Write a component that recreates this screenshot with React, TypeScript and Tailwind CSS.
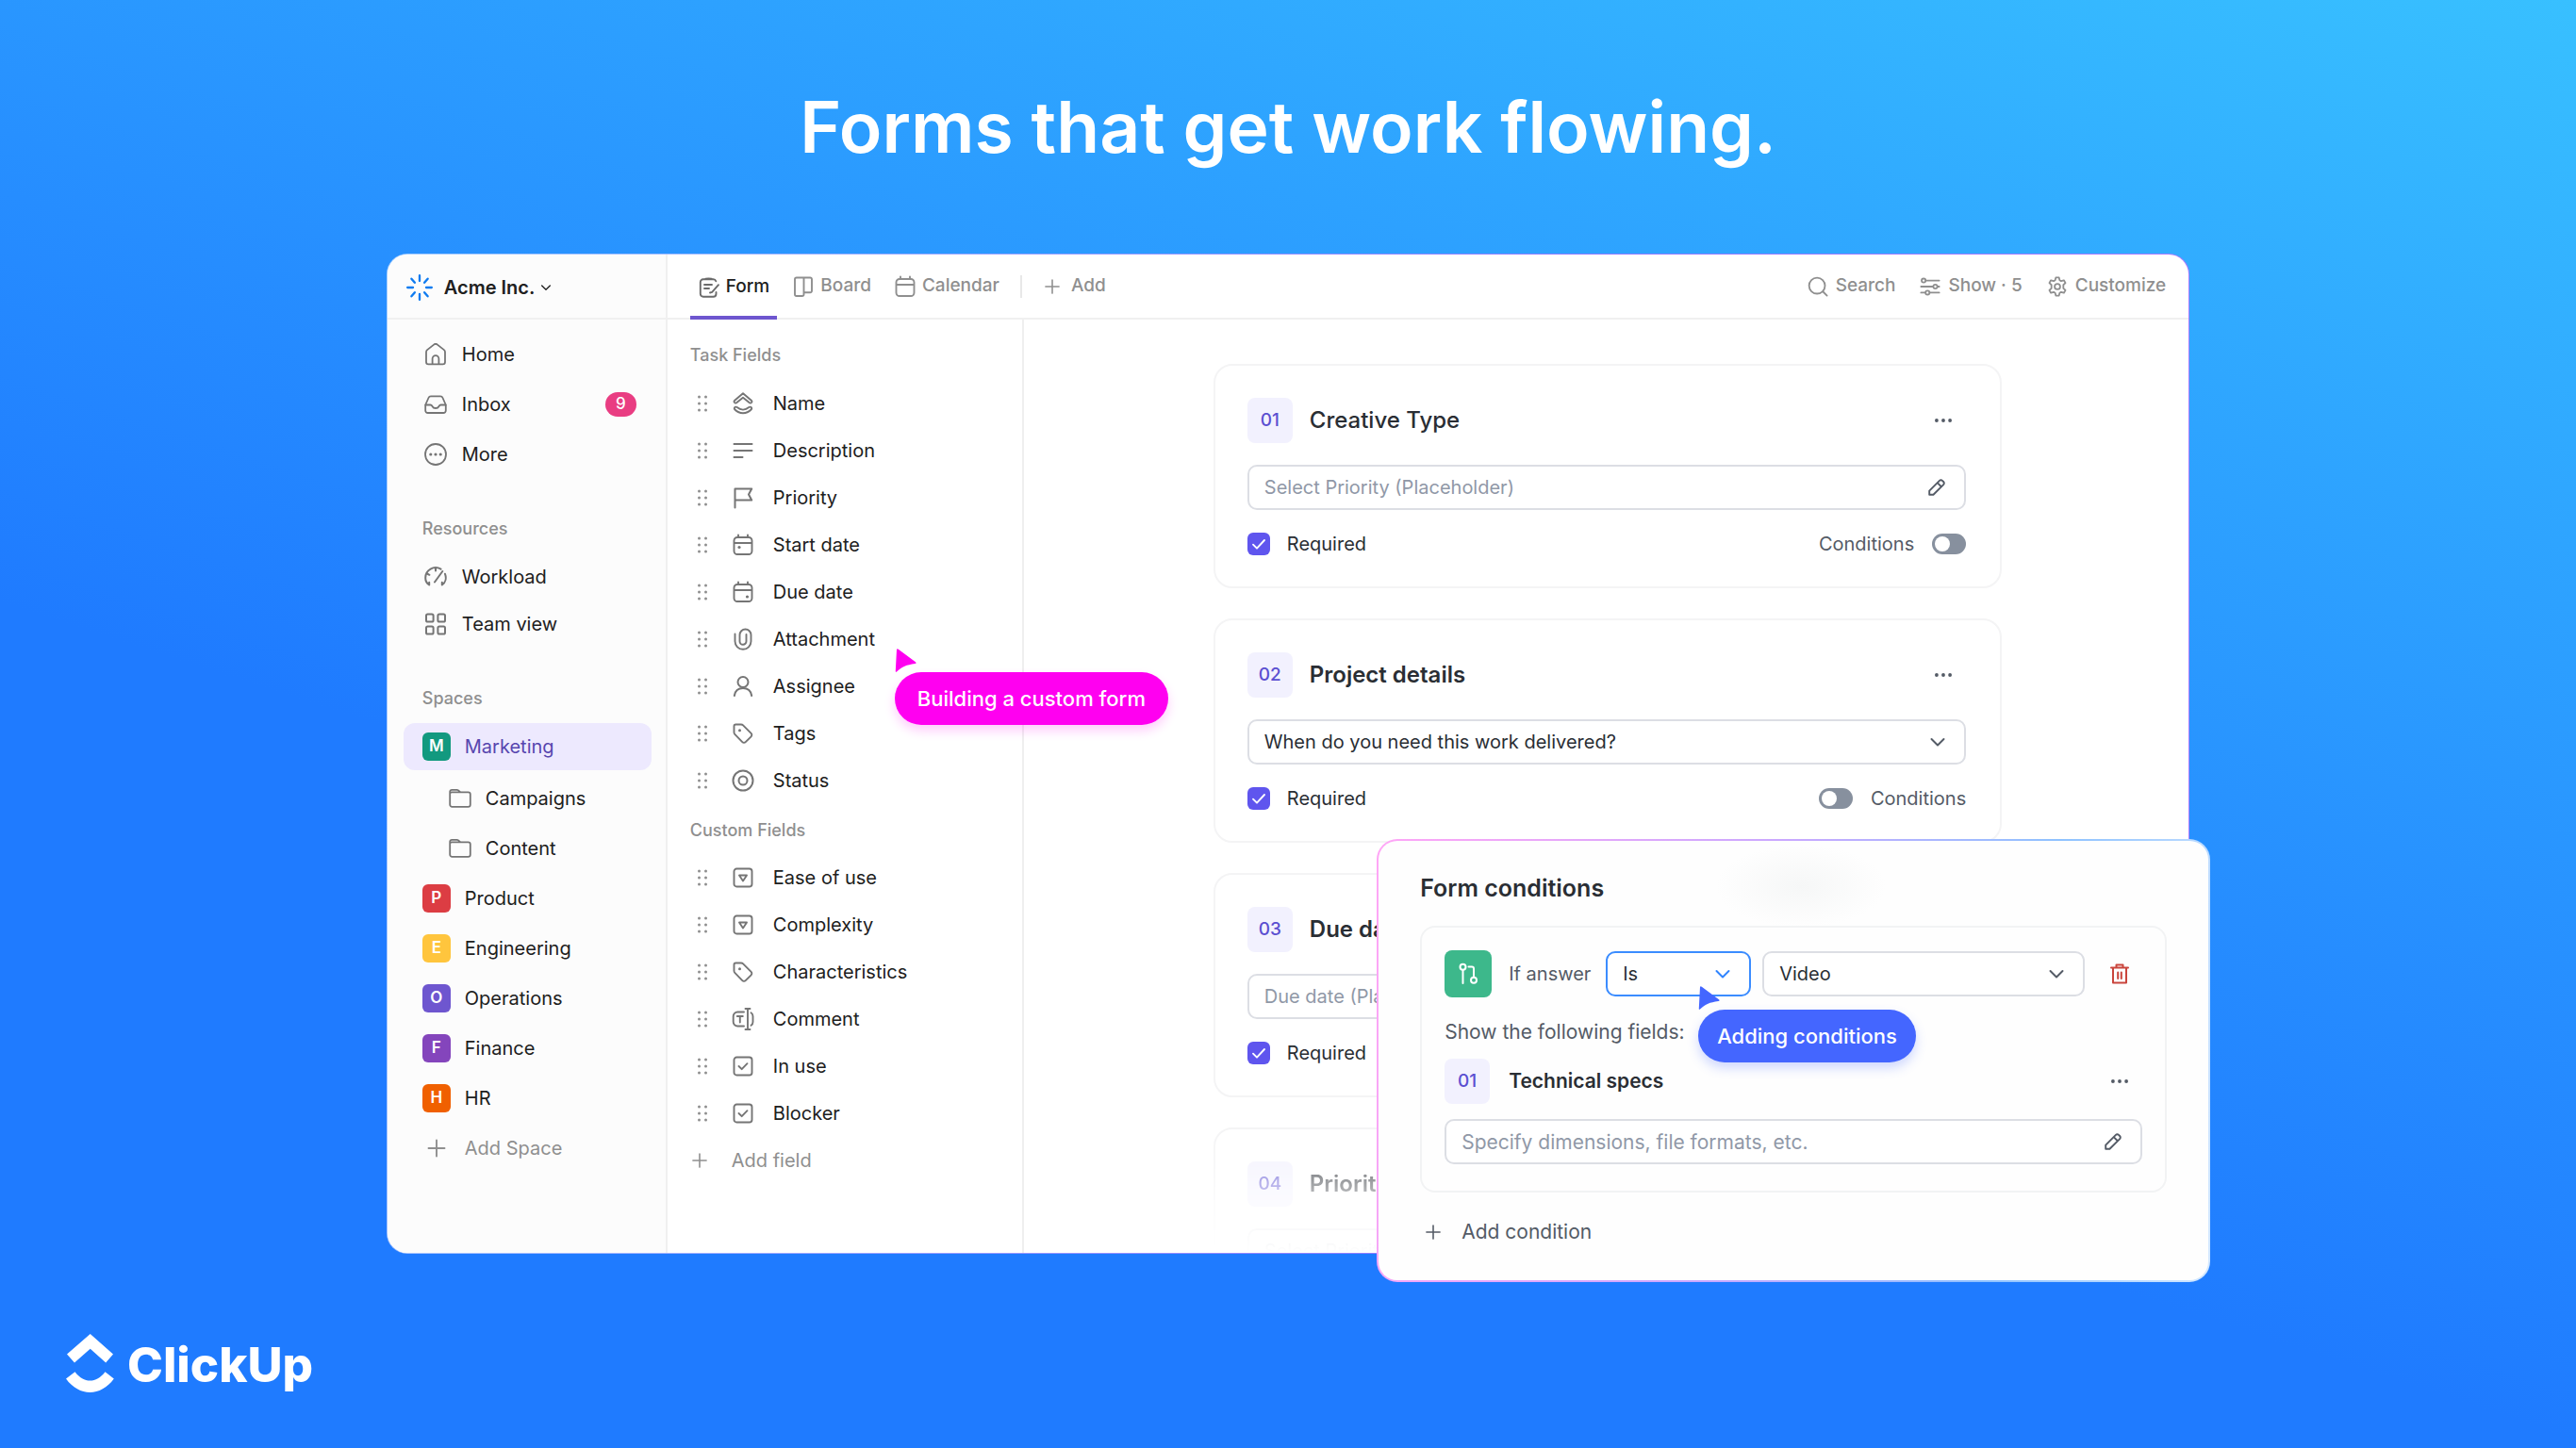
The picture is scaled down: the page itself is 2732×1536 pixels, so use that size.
import type { ReactNode } from "react";
import clsx from "clsx";

interface IconProps {
  className?: string;
  strokeWidth?: number;
  children: ReactNode;
}

const Icon = ({ className = "size-6", strokeWidth = 2, children }: IconProps) => (
  <svg
    viewBox="0 0 24 24"
    fill="none"
    stroke="currentColor"
    strokeWidth={strokeWidth}
    strokeLinecap="round"
    strokeLinejoin="round"
    aria-hidden="true"
    className={clsx("shrink-0", className)}
  >
    {children}
  </svg>
);

interface GlyphProps {
  className?: string;
}

const BurstIcon = () => (
  <Icon className="size-7 text-[#0f7bf0]" strokeWidth={2}>
    <path d="M12 1v5M12 18v5M1 12h5M18 12h5M4.6 4l3 3.6M19.4 4l-3 3.6M4.6 20l3-3.6M19.4 20l-3-3.6" />
  </Icon>
);

const HomeIcon = () => (
  <Icon strokeWidth={1.8}>
    <path d="M2 9.4a3 3 0 0 1 1.1-2.3l7-5.5a3 3 0 0 1 3.8 0l7 5.5A3 3 0 0 1 22 9.4V20a2.4 2.4 0 0 1-2.4 2.4H4.4A2.4 2.4 0 0 1 2 20z" />
    <path d="M8.6 22v-5.400a3.400 3.400 0 0 1 6.800 0V22" />
  </Icon>
);

const InboxIcon = () => (
  <Icon strokeWidth={1.8}>
    <path d="M1.200 12.500 4.500 5a2.600 2.600 0 0 1 2.400-1.600h10.200A2.600 2.600 0 0 1 19.500 5l3.300 7.500v6a2.500 2.500 0 0 1-2.500 2.500H3.700a2.500 2.500 0 0 1-2.500-2.500z" />
    <path d="M1.400 12.500h5.100c1.300 0 1.500.7 2.100 1.700.7 1.300 1.800 1.800 3.400 1.800s2.700-.5 3.400-1.800c.6-1 .8-1.700 2.100-1.700h5.100" />
  </Icon>
);

const MoreIcon = () => (
  <Icon strokeWidth={1.8}>
    <circle cx="12" cy="12" r="11" />
    <g fill="currentColor" stroke="none">
      <circle cx="6.800" cy="12" r="1.600" />
      <circle cx="12" cy="12" r="1.600" />
      <circle cx="17.200" cy="12" r="1.600" />
    </g>
  </Icon>
);

const GaugeIcon = () => (
  <Icon strokeWidth={2}>
    <path d="M5.200 20.500c-2.600-1.600-4-4.400-4-7.400A10.800 10.800 0 0 1 17.500 3.700M12 2.500v3M3 8.500l2.400 1.300M5.200 20.500v-2.700M22 8.800c1.600 4.200.6 9-3.200 11.700v-2.700M19.300 6 11 17.500" />
  </Icon>
);

const GridIcon = () => (
  <Icon strokeWidth={2}>
    <rect x="2" y="1.500" width="7.600" height="8" rx="1.600" />
    <rect x="14.400" y="1.500" width="7.600" height="8" rx="1.600" />
    <rect x="2" y="14.500" width="7.600" height="8" rx="1.600" />
    <rect x="14.400" y="14.500" width="7.600" height="8" rx="1.600" />
  </Icon>
);

const FolderIcon = () => (
  <Icon className="size-6 text-[#757575]" strokeWidth={1.8}>
    <path d="M1.200 8V4.800a2 2 0 0 1 2-2h5.300c.7 0 1.100.2 1.600.6l2.300 2h8.200a2.200 2.200 0 0 1 2.200 2.200v10.900a2.400 2.400 0 0 1-2.400 2.400H3.600a2.400 2.400 0 0 1-2.400-2.400zM1.400 6.200c.5-.5 1-.8 1.800-.8h9.200" />
  </Icon>
);

const PlusIcon = ({ className = "size-6" }: GlyphProps) => (
  <Icon className={className} strokeWidth={1.9}>
    <path d="M12 3.500v17M3.500 12h17" />
  </Icon>
);

const ChevronIcon = ({ className = "size-6" }: GlyphProps) => (
  <Icon className={className}>
    <path d="m5.500 9 6.500 6.500L18.500 9" />
  </Icon>
);

const DotsIcon = () => (
  <Icon className="size-5 text-[#545b66]">
    <g fill="currentColor" stroke="none">
      <circle cx="3.500" cy="12" r="2.300" />
      <circle cx="12" cy="12" r="2.300" />
      <circle cx="20.500" cy="12" r="2.300" />
    </g>
  </Icon>
);

const PencilIcon = () => (
  <Icon className="pointer-events-none size-[22px] text-[#545b66]" strokeWidth={2.1}>
    <path d="M3.500 20.500v-4.600L15.200 4.200a2.300 2.300 0 0 1 3.300 0l1.300 1.300a2.300 2.300 0 0 1 0 3.300L8.100 20.500zM12.800 6.700l4.500 4.500" />
  </Icon>
);

const FormIcon = () => (
  <Icon className="size-6 text-[#6b6b6b]" strokeWidth={1.9}>
    <path d="M19.500 17v1.800a3 3 0 0 1-3 3H5.800a3 3 0 0 1-3-3V6.300a3 3 0 0 1 3-3h10.700a3 3 0 0 1 2.800 2M7.500 3.300c.8-1.300 7.200-1.300 8 0M7 9h8M7 13h5M22 9.200l-6.800 7.600-2.200.7" />
  </Icon>
);

const BoardIcon = () => (
  <Icon strokeWidth={1.9}>
    <path d="M4.800 2.500h14.400A1.800 1.800 0 0 1 21 4.300v12.200a1.800 1.800 0 0 1-1.800 1.800h-6.700v1.900a1.800 1.800 0 0 1-1.800 1.800H4.800A1.800 1.800 0 0 1 3 20.200V4.300a1.800 1.800 0 0 1 1.800-1.800zM12.500 2.500v15.800" />
  </Icon>
);

const CalendarIcon = ({ children }: { children?: ReactNode }) => (
  <Icon strokeWidth={1.9}>
    <rect x="2.500" y="4" width="19" height="18" rx="3.500" />
    <path d="M2.800 10h18.400M7 1.500V4M17 1.500V4" />
    {children}
  </Icon>
);

const SearchIcon = () => (
  <Icon className="size-[22px]" strokeWidth={2}>
    <circle cx="11" cy="11" r="9.200" />
    <path d="m18 18 4.500 4.500" />
  </Icon>
);

const SlidersIcon = () => (
  <Icon className="size-[22px]" strokeWidth={2}>
    <path d="M7 5h15.500M1.500 12h13.800M20.500 12h2M1.500 19h5.200M11.500 19h11" />
    <circle cx="4.500" cy="5" r="2.300" />
    <circle cx="18" cy="12" r="2.300" />
    <circle cx="9" cy="19" r="2.300" />
  </Icon>
);

const GearIcon = () => (
  <Icon className="size-[22px]" strokeWidth={2}>
    <circle cx="12" cy="12" r="3.200" />
    <path d="M10.200 1.500h3.600l.8 3.200 1.700 1 3.200-1 1.800 3.100-2.400 2.300v3.800l2.400 2.300-1.800 3.100-3.200-1-1.700 1-.8 3.200h-3.600l-.8-3.200-1.700-1-3.200 1-1.800-3.100 2.400-2.300v-3.800L2.700 7.800l1.800-3.100 3.200 1 1.700-1z" />
  </Icon>
);

const NameIcon = () => (
  <Icon strokeWidth={1.9}>
    <path d="M12 1.200 3.200 8.700c-.8.8-.8 1.600-.2 2.300s1.600.8 2.400.1L12 5.800l6.600 5.300c.8.700 1.800.6 2.400-.1s.6-1.500-.2-2.300zM3.200 16.200c.7-.8 1.800-.8 2.500-.1 3.800 3.200 8.800 3.200 12.600 0 .7-.7 1.800-.7 2.500.1.600.8.500 1.600-.2 2.300-5 5-12.200 5-17.200 0-.7-.7-.8-1.500-.2-2.300z" />
  </Icon>
);

const LinesIcon = () => (
  <Icon strokeWidth={2}>
    <path d="M2.500 5h19M2.500 12h19M2.500 19h9" />
  </Icon>
);

const FlagIcon = () => (
  <Icon strokeWidth={2}>
    <path d="M3.500 22.500V2.500h17.700L18 8.500l3.200 6H3.500" />
  </Icon>
);

const ClipIcon = () => (
  <Icon strokeWidth={1.9}>
    <path d="M3.500 6.500v7.800a8.500 8.500 0 0 0 17 0V7.500a6 6 0 0 0-12 0v6.800a3.500 3.500 0 0 0 7 0V7" />
  </Icon>
);

const PersonIcon = () => (
  <Icon strokeWidth={2}>
    <circle cx="12" cy="7.500" r="5.500" />
    <path d="M2.800 22c.8-5 4.200-8 9.200-8s8.400 3 9.200 8" />
  </Icon>
);

const TagIcon = () => (
  <Icon strokeWidth={1.9}>
    <path d="M4.300 2.500H10a3 3 0 0 1 2.100.9l8.500 8.500a2.400 2.400 0 0 1 0 3.400l-5.900 5.900a2.400 2.400 0 0 1-3.400 0l-8-8.300A3 3 0 0 1 2.500 11V4.300a1.800 1.800 0 0 1 1.800-1.800z" />
    <circle cx="8.500" cy="8.700" r="1.500" fill="currentColor" stroke="none" />
  </Icon>
);

const TargetIcon = () => (
  <Icon strokeWidth={2}>
    <circle cx="12" cy="12" r="10.500" />
    <circle cx="12" cy="12" r="4.500" />
  </Icon>
);

const DropdownIcon = () => (
  <Icon strokeWidth={1.9}>
    <rect x="2.500" y="2.500" width="19" height="19" rx="2.800" />
    <path d="M8 9.500h8L12 15.500z" />
  </Icon>
);

const CheckBoxIcon = () => (
  <Icon strokeWidth={1.9}>
    <rect x="2.500" y="2.500" width="19" height="19" rx="2.800" />
    <path d="m7.500 12 3.200 3.200 5.800-6" />
  </Icon>
);

const TextFieldIcon = () => (
  <Icon strokeWidth={1.9}>
    <path d="M13 4.500H6.200A4.500 4.500 0 0 0 1.700 9v6a4.500 4.500 0 0 0 4.500 4.500H13M20.500 5.200c1.300.8 2 2.200 2 3.800v6c0 1.600-.7 3-2 3.800M14.500 1h5M17 1v22M14.500 23h5M5.800 9h6M8.800 9v6.500" />
  </Icon>
);

const BranchIcon = () => (
  <Icon strokeWidth={2}>
    <circle cx="6.500" cy="4.800" r="3" />
    <path d="M6.500 8v14M12.500 4.500H16a2 2 0 0 1 2 2v9" />
    <circle cx="18" cy="18.800" r="3" />
  </Icon>
);

const TrashIcon = () => (
  <Icon className="size-6 text-[#c9453c]" strokeWidth={2}>
    <path d="M3 5.500h18M8.500 5V2.500h7V5M5 6v15.500h14V6M10.200 10.500v6.500M13.800 10.500v6.500" />
  </Icon>
);

const DragHandle = () => (
  <svg viewBox="0 0 12 20" fill="#8f8f8f" aria-hidden="true" className="h-5 w-3 shrink-0">
    {[3, 10, 17].map((y) => (
      <g key={y}>
        <circle cx="2.500" cy={y} r="1.500" />
        <circle cx="9.500" cy={y} r="1.500" />
      </g>
    ))}
  </svg>
);

const mainLinks = [
  { label: "Home", icon: <HomeIcon /> },
  { label: "Inbox", icon: <InboxIcon />, count: 9 },
  { label: "More", icon: <MoreIcon /> },
];

const resourceLinks = [
  { label: "Workload", icon: <GaugeIcon /> },
  { label: "Team view", icon: <GridIcon /> },
];

const spaces = [
  { label: "Product", color: "bg-[#dc3d43]" },
  { label: "Engineering", color: "bg-[#ffc53d]" },
  { label: "Operations", color: "bg-[#6e56cf]" },
  { label: "Finance", color: "bg-[#8445bc]" },
  { label: "HR", color: "bg-[#f06000]" },
];

const taskFields = [
  { label: "Name", icon: <NameIcon /> },
  { label: "Description", icon: <LinesIcon /> },
  { label: "Priority", icon: <FlagIcon /> },
  {
    label: "Start date",
    icon: (
      <CalendarIcon>
        <circle cx="8" cy="14.500" r="1.600" fill="currentColor" stroke="none" />
      </CalendarIcon>
    ),
  },
  {
    label: "Due date",
    icon: (
      <CalendarIcon>
        <circle cx="16.500" cy="17" r="1.600" fill="currentColor" stroke="none" />
      </CalendarIcon>
    ),
  },
  { label: "Attachment", icon: <ClipIcon /> },
  { label: "Assignee", icon: <PersonIcon /> },
  { label: "Tags", icon: <TagIcon /> },
  { label: "Status", icon: <TargetIcon /> },
];

const customFields = [
  { label: "Ease of use", icon: <DropdownIcon /> },
  { label: "Complexity", icon: <DropdownIcon /> },
  { label: "Characteristics", icon: <TagIcon /> },
  { label: "Comment", icon: <TextFieldIcon /> },
  { label: "In use", icon: <CheckBoxIcon /> },
  { label: "Blocker", icon: <CheckBoxIcon /> },
];

const SpaceBadge = ({ letter, color }: { letter: string; color: string }) => (
  <span
    className={clsx(
      "flex size-[30px] items-center justify-center rounded-md text-[17px] font-semibold text-white",
      color
    )}
  >
    {letter}
  </span>
);

const Sidebar = () => (
  <aside className="w-[297px] shrink-0 border-r-2 border-[#f0f0f0] bg-[#fcfcfc] pb-20 text-[20px]">
    <button className="flex h-[69px] w-full items-center border-b-2 border-[#f0f0f0] pt-0.5 pl-5">
      <BurstIcon />
      <span className="ml-3 font-semibold">Acme Inc.</span>
      <ChevronIcon className="ml-1 size-4" />
    </button>
    <nav className="pt-2.5 pr-[15px] pl-[17px]">
      {mainLinks.map((link) => (
        <a key={link.label} href="#" className="flex h-[53px] items-center gap-4 px-[22px]">
          <span className="text-[#757575]">{link.icon}</span>
          {link.label}
          {link.count && (
            <span className="-mr-1.5 ml-auto flex h-[26px] w-[33px] items-center justify-center rounded-full bg-[#e93d82] text-[17px] font-medium text-white">
              {link.count}
            </span>
          )}
        </a>
      ))}
      <h2 className="mt-[39px] px-5 text-[18px] leading-[28px] font-medium text-[#8f8f8f]">
        Resources
      </h2>
      <div className="mt-3">
        {resourceLinks.map((link) => (
          <a key={link.label} href="#" className="flex h-[50px] items-center gap-4 px-[22px]">
            <span className="text-[#757575]">{link.icon}</span>
            {link.label}
          </a>
        ))}
      </div>
      <h2 className="mt-10 px-5 text-[18px] leading-[28px] font-medium text-[#8f8f8f]">Spaces</h2>
      <a
        href="#"
        className="mt-3 mb-[3px] flex h-[50px] items-center gap-[15px] rounded-xl bg-[#ede9fe] px-5 text-[#5746af]"
      >
        <SpaceBadge letter="M" color="bg-[#12997f]" />
        Marketing
      </a>
      {["Campaigns", "Content"].map((name) => (
        <a key={name} href="#" className="flex h-[53px] items-center gap-[15px] pl-12">
          <FolderIcon />
          {name}
        </a>
      ))}
      {spaces.map((space) => (
        <a key={space.label} href="#" className="flex h-[53px] items-center gap-[15px] px-5">
          <SpaceBadge letter={space.label[0]} color={space.color} />
          {space.label}
        </a>
      ))}
      <button className="flex h-[53px] items-center gap-[18px] px-[23px] text-[#8f8f8f]">
        <PlusIcon />
        Add Space
      </button>
    </nav>
  </aside>
);

const TopBar = () => (
  <header className="flex h-[69px] items-center justify-between border-b-2 border-[#f0f0f0] pr-6 pl-6 text-[19px] font-medium text-[#8f8f8f]">
    <div className="flex h-full items-center">
      <button className="-mb-0.5 flex h-[69px] items-center gap-1.5 border-b-4 border-[#6e56cf] px-2 pt-1 text-[#202020]">
        <FormIcon />
        Form
      </button>
      <button className="ml-2 flex h-full items-center gap-1.5 px-2">
        <BoardIcon />
        Board
      </button>
      <button className="ml-2 flex h-full items-center gap-1.5 px-2">
        <CalendarIcon />
        Calendar
      </button>
      <span className="ml-3.5 h-6 w-0.5 bg-[#e8e8e8]" />
      <button className="ml-[22px] flex h-full items-center gap-2.5">
        <PlusIcon className="size-5" />
        Add
      </button>
    </div>
    <div className="flex items-center gap-[26px]">
      <button className="flex items-center gap-2">
        <SearchIcon />
        Search
      </button>
      <button className="flex items-center gap-2">
        <SlidersIcon />
        Show · 5
      </button>
      <button className="flex items-center gap-2">
        <GearIcon />
        Customize
      </button>
    </div>
  </header>
);

const FieldRow = ({ label, icon }: { label: string; icon: ReactNode }) => (
  <li className="flex h-[50px] items-center">
    <DragHandle />
    <span className="ml-[25px] text-[#757575]">{icon}</span>
    <span className="ml-5">{label}</span>
  </li>
);

const FieldsPanel = () => (
  <section className="w-[378px] shrink-0 border-r-2 border-[#efefef] pt-6 pl-6 text-[20px]">
    <h2 className="text-[18px] leading-[28px] font-medium text-[#8f8f8f]">Task Fields</h2>
    <ul className="mt-3 pl-[7px]">
      {taskFields.map((field) => (
        <FieldRow key={field.label} {...field} />
      ))}
    </ul>
    <h2 className="mt-3.5 text-[18px] leading-[28px] font-medium text-[#8f8f8f]">
      Custom Fields
    </h2>
    <ul className="mt-[11px] pl-[7px]">
      {customFields.map((field) => (
        <FieldRow key={field.label} {...field} />
      ))}
    </ul>
    <button className="flex h-[50px] items-center gap-6 text-[#8f8f8f]">
      <PlusIcon className="size-5" />
      Add field
    </button>
  </section>
);

const NumberBadge = ({ value }: { value: string }) => (
  <span className="flex size-12 shrink-0 items-center justify-center rounded-lg bg-[#f2f1fe] text-[19px] font-medium text-[#5b4fd1]">
    {value}
  </span>
);

interface TextFieldProps {
  label: string;
  placeholder: string;
  large?: boolean;
}

const TextField = ({ label, placeholder, large }: TextFieldProps) => (
  <div className="grid items-center">
    <input
      type="text"
      aria-label={label}
      placeholder={placeholder}
      className={clsx(
        "h-12 w-full rounded-[10px] border-2 border-[#dcdee4] bg-white px-4 placeholder:text-[#9098a7] [grid-area:1/1]",
        large ? "text-[21px]" : "text-[20px]"
      )}
    />
    <span className="justify-self-end pr-5 [grid-area:1/1]">
      <PencilIcon />
    </span>
  </div>
);

interface SelectFieldProps {
  label: string;
  value: string;
  className?: string;
  active?: boolean;
}

const SelectField = ({ label, value, className, active }: SelectFieldProps) => (
  <div className={clsx("grid items-center", className)}>
    <select
      aria-label={label}
      className={clsx(
        "h-12 w-full appearance-none rounded-[10px] border-2 bg-white px-4 text-[20px] text-[#2a2e34] [grid-area:1/1]",
        active ? "border-[#3b8cff]" : "border-[#dcdee4]"
      )}
    >
      <option>{value}</option>
    </select>
    <ChevronIcon
      className={clsx(
        "pointer-events-none mr-[18px] size-6 justify-self-end [grid-area:1/1]",
        active ? "text-[#2f84ff]" : "text-[#545b66]"
      )}
    />
  </div>
);

const RequiredBox = () => (
  <label className="flex items-center gap-[18px] text-[#2a2e34]">
    <span className="grid size-6 place-items-center">
      <input
        type="checkbox"
        defaultChecked
        className="size-6 appearance-none rounded-md bg-[#5f55ee] [grid-area:1/1]"
      />
      <Icon className="pointer-events-none size-4 text-white [grid-area:1/1]" strokeWidth={2.8}>
        <path d="m3 13 6 6L21 6" />
      </Icon>
    </span>
    Required
  </label>
);

const ConditionsSwitch = ({ reversed }: { reversed?: boolean }) => (
  <label
    className={clsx(
      "flex items-center gap-[19px] text-[#545b66]",
      reversed && "flex-row-reverse"
    )}
  >
    Conditions
    <input
      type="checkbox"
      role="switch"
      className="flex h-[22px] w-9 appearance-none items-center rounded-full bg-[#87909e] px-[3px] before:size-4 before:rounded-full before:bg-white"
    />
  </label>
);

interface FormCardProps {
  number: string;
  title: string;
  medium?: boolean;
  footer?: ReactNode;
  children: ReactNode;
}

const FormCard = ({ number, title, medium, footer, children }: FormCardProps) => (
  <article className="rounded-[20px] border-2 border-[#f4f4f5] pt-[34px] pr-9 pb-[33px] pl-[34px] text-[20px]">
    <div className="mb-[23px] flex items-center">
      <NumberBadge value={number} />
      <h3
        className={clsx(
          "ml-[18px] text-[24px] leading-[28px] text-[#2a2e34]",
          medium ? "font-medium" : "font-semibold"
        )}
      >
        {title}
      </h3>
      <button aria-label={`${title} options`} className="mr-3.5 ml-auto">
        <DotsIcon />
      </button>
    </div>
    {children}
    {footer && <div className="mt-6 flex h-6 items-center justify-between">{footer}</div>}
  </article>
);

const FormPreview = () => (
  <main className="flex min-w-0 flex-1 flex-col gap-8 pt-[47px] pr-[198px] pl-[201px]">
    <FormCard
      number="01"
      title="Creative Type"
      medium
      footer={
        <>
          <RequiredBox />
          <ConditionsSwitch />
        </>
      }
    >
      <TextField label="Creative Type" placeholder="Select Priority (Placeholder)" />
    </FormCard>
    <FormCard
      number="02"
      title="Project details"
      footer={
        <>
          <RequiredBox />
          <ConditionsSwitch reversed />
        </>
      }
    >
      <SelectField label="Project details" value="When do you need this work delivered?" />
    </FormCard>
    <FormCard number="03" title="Due date" footer={<RequiredBox />}>
      <TextField label="Due date" placeholder="Due date (Placeholder)" />
    </FormCard>
    <div className="h-[133px] overflow-hidden [mask-image:linear-gradient(black,rgb(0_0_0/0.38)_50%,transparent)]">
      <FormCard number="04" title="Priority">
        <TextField label="Priority" placeholder="Select Priority (Placeholder)" />
      </FormCard>
    </div>
  </main>
);

interface CursorTagProps {
  label: string;
  className: string;
  pillClassName: string;
}

const CursorTag = ({ label, className, pillClassName }: CursorTagProps) => (
  <div className={clsx("absolute", className)}>
    <svg viewBox="0 0 23 25" fill="currentColor" aria-hidden="true" className="h-[25px] w-[23px]">
      <path d="M2 1Q2.400-.4 3.800.8L22 14.300q1.400 1.400-.6 1.800C12 17.500 8 19 2.300 24.300Q.6 25.600.8 23.500z" />
    </svg>
    <div
      className={clsx(
        "flex h-14 items-center rounded-full text-[22px] font-medium whitespace-nowrap",
        pillClassName
      )}
    >
      <span className="text-white">{label}</span>
    </div>
  </div>
);

const ConditionsPanel = () => (
  <section className="absolute -right-[22px] -bottom-[30px] w-[884px] rounded-[22px] border-2 border-transparent px-11 pt-9 pb-[37px] text-[21px] text-[#545b66] [background:radial-gradient(90px_44px_at_448px_48px,#f6f7f7,transparent)_padding-box,linear-gradient(#fefefe,#fefefe)_padding-box,linear-gradient(100deg,#ffa6f6,#c9a8ff_45%,#8fc2ff_75%,#d3e8ff)_border-box]">
    <h2 className="text-[25px] leading-[28px] font-semibold text-[#2a2e34]">Form conditions</h2>
    <div className="mt-[26px] rounded-2xl border-2 border-[#f2f3f4] px-6 pt-6 pb-7">
      <div className="flex items-center">
        <span className="flex size-[50px] shrink-0 items-center justify-center rounded-lg bg-[#3db88b] text-white">
          <BranchIcon />
        </span>
        <span className="ml-[18px] w-[103px] shrink-0 text-[20px]">If answer</span>
        <SelectField label="Comparison" value="Is" active className="w-[154px] shrink-0" />
        <SelectField label="Answer" value="Video" className="ml-3 flex-1" />
        <button aria-label="Delete condition" className="mr-3 ml-[25px]">
          <TrashIcon />
        </button>
      </div>
      <p className="mt-[23px] leading-[28px]">Show the following fields:</p>
      <div className="mt-3.5 flex items-center">
        <NumberBadge value="01" />
        <h3 className="ml-5 leading-[28px] font-semibold text-[#2a2e34]">Technical specs</h3>
        <button aria-label="Technical specs options" className="mr-3.5 ml-auto">
          <DotsIcon />
        </button>
      </div>
      <div className="mt-4">
        <TextField
          label="Technical specs"
          placeholder="Specify dimensions, file formats, etc."
          large
        />
      </div>
    </div>
    <button className="mt-7 flex items-center gap-5 pl-1 leading-[28px]">
      <PlusIcon className="size-5" />
      Add condition
    </button>
    <CursorTag
      label="Adding conditions"
      className="top-[154px] left-[339px] text-[#4466ff]"
      pillClassName="bg-[#4466ff] px-5 shadow-[0_6px_12px_rgba(68,102,255,0.25)]"
    />
  </section>
);

const Logo = () => (
  <div className="flex items-center gap-3.5 text-white">
    <svg viewBox="0 0 51 62" fill="currentColor" aria-hidden="true" className="h-[62px] w-[51px]">
      <path d="M25.700 0 50 21.500l-7.800 9L25.700 15.800 9 30.500l-8-9z" />
      <path d="m0 47.500 9.500-7.300c9.500 12.500 22.500 12.500 32 0l9.300 7.300c-14 19.300-36.800 19.300-50.800 0z" />
    </svg>
    <span className="pt-1 text-[51px] leading-[58px] font-extrabold">ClickUp</span>
  </div>
);

export default function App() {
  return (
    <div className="flex min-h-screen flex-col bg-[linear-gradient(198deg,#38c0ff,#2ea4ff_24%,#268dff_45%,#1f7bff_63%)] font-[Inter,sans-serif] text-[#202020]">
      <h1 className="pt-[87px] text-center text-[75px] leading-[96px] font-semibold text-white">
        Forms that get work flowing.
      </h1>
      <div className="relative mx-auto mt-[86px] w-[70%]">
        <div className="flex overflow-hidden rounded-[22px] border border-transparent [background:linear-gradient(#fff,#fff)_padding-box,linear-gradient(100deg,#a9d0ff,#8f7cff_60%,#b07cff)_border-box]">
          <Sidebar />
          <div className="flex min-w-0 flex-1 flex-col">
            <TopBar />
            <div className="flex flex-1">
              <FieldsPanel />
              <FormPreview />
            </div>
          </div>
        </div>
        <CursorTag
          label="Building a custom form"
          className="top-[419px] left-[539px] text-[#ff00f0]"
          pillClassName="bg-[#ff00f0] px-6 shadow-[0_6px_12px_rgba(255,0,240,0.2)]"
        />
        <ConditionsPanel />
      </div>
      <footer className="mt-auto px-[70px] pt-20 pb-[59px]">
        <Logo />
      </footer>
    </div>
  );
}
